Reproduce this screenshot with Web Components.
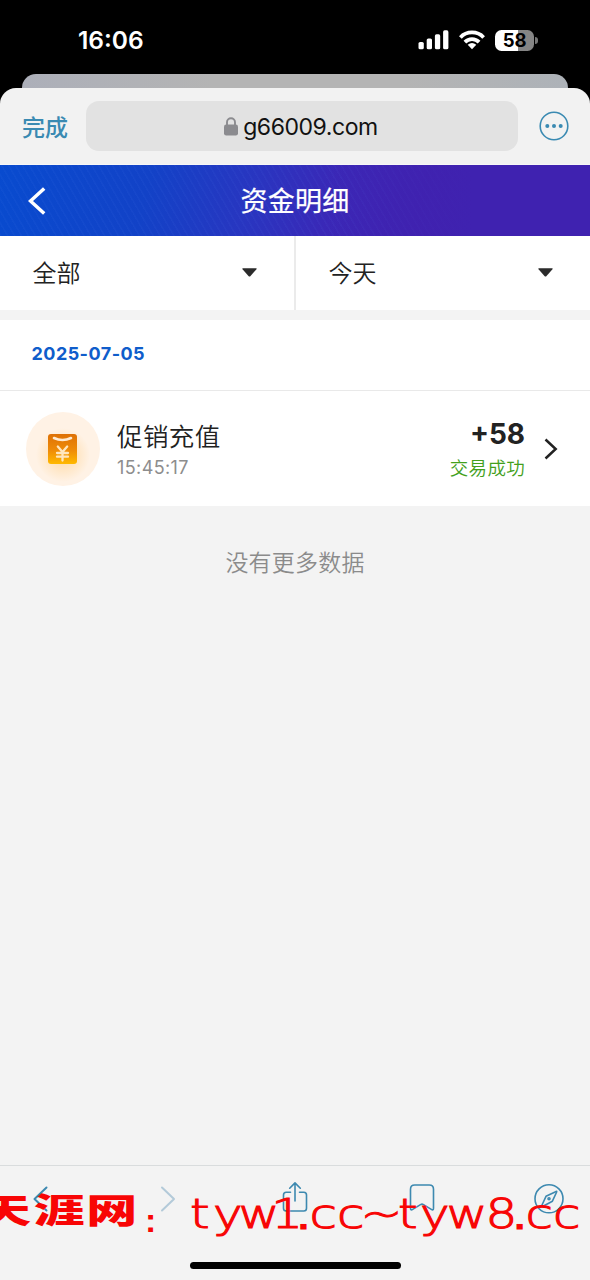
<!DOCTYPE html>
<html lang="zh-CN">
<head>
<meta charset="utf-8">
<title>资金明细</title>
<style>
html,body{margin:0;background:#000}
body{width:590px;height:1280px;overflow:hidden;font-family:Inter,"Noto Sans CJK SC",sans-serif}
</style>
</head>
<body>
<funds-app></funds-app>
<script>
function define(name, html) {
  const template = document.createElement('template');
  template.innerHTML = html;
  customElements.define(name, class extends HTMLElement {
    constructor() {
      super();
      this.attachShadow({ mode: 'open' }).appendChild(template.content.cloneNode(true));
    }
  });
}

define('status-bar', `
<style>
:host{display:flex;flex-direction:column;height:88px;background:#000;color:#fff}
.row{display:flex;align-items:center;height:74px;padding:6px 52px 0 78px;box-sizing:border-box;justify-content:space-between}
.time{font-size:24.5px;font-weight:600;line-height:30px;letter-spacing:0}
.icons{display:flex;align-items:center;gap:9px}
svg{display:block}
.battery{display:flex;align-items:center;gap:1px}
.cell{width:39px;height:21px;border-radius:6.5px;background:linear-gradient(90deg,#fff 58%,#858585 58%);color:#000;font-weight:700;font-size:18.5px;line-height:21px;text-align:center;letter-spacing:-.3px}
.tip{width:3px;height:7px;border-radius:0 3px 3px 0;background:#777}
.back{height:14px;margin:0 22px;border-radius:14px 14px 0 0;background:linear-gradient(90deg,#acafb9,#b4b4b4 35%,#b4b4b4 70%,#adb2b8)}
</style>
<div class="row"><span class="time">16:06</span>
<div class="icons">
<svg width="31" height="20" viewBox="0 0 31 20" fill="#fff"><rect x="0.5" y="12" width="5.3" height="7.3" rx="1.6"/><rect x="8.7" y="8.5" width="5.3" height="10.8" rx="1.6"/><rect x="16.9" y="4.3" width="5.3" height="15" rx="1.6"/><rect x="25.1" y=".3" width="5.3" height="19" rx="1.6"/></svg>
<svg width="28" height="20" viewBox="0 0 28 20"><g fill="none" stroke="#fff" stroke-width="3.7"><path d="M2.4 7.4C8.5.8 19.5.8 25.6 7.4"/><path d="M6.9 12.1C10.8 8 17.2 8 21.1 12.1"/></g><path d="M9.7 14.8Q14 11.2 18.3 14.8L14 19.3Z" fill="#fff"/></svg>
<div class="battery"><div class="cell">58</div><div class="tip"></div></div>
</div></div>
<div class="back"></div>`);

define('address-bar', `
<style>
:host{display:flex;align-items:center;box-sizing:border-box;height:77px;padding:0 21px 1px 22px;background:#f2f2f2;border-radius:16px 16px 0 0;box-shadow:inset 0 -1px #f7f7f7}
.done{width:64px;color:#3a8ab2;font-weight:500;font-size:23px;line-height:30px;font-family:"Noto Sans CJK SC",sans-serif}
.field{display:flex;align-items:center;justify-content:center;gap:6px;width:432px;height:50px;border-radius:13px;background:#e2e2e2;color:#111;font-size:23px;letter-spacing:-.45px}
.field span{margin:1px 1px 0 -1px}
.field svg{margin-left:-1px}
.more{margin-left:auto;display:block}
</style>
<span class="done">完成</span>
<div class="field"><svg width="14" height="19" viewBox="0 0 14 19"><rect y="7.6" width="14" height="10.8" rx="2.2" fill="#8b8b8f"/><path d="M3 9V5.2a4 4 0 0 1 8 0V9" fill="none" stroke="#8b8b8f" stroke-width="1.9"/></svg><span>g66009.com</span></div>
<svg class="more" width="30" height="30" viewBox="0 0 30 30"><circle cx="15" cy="15" r="13.8" fill="none" stroke="#3a8ab2" stroke-width="1.6"/><g fill="#3a8ab2"><circle cx="8.3" cy="15" r="2"/><circle cx="15" cy="15" r="2"/><circle cx="21.7" cy="15" r="2"/></g></svg>`);

define('page-header', `
<style>
:host{display:grid;grid-template-columns:80px 1fr 80px;align-items:center;height:71px;color:#fff;background:linear-gradient(90deg,transparent 55%,#3f22b0 80%),repeating-linear-gradient(60deg,rgba(110,150,255,.05) 0 1px,transparent 2px 6px),linear-gradient(102deg,#084bcf 0%,#1242c7 25%,#2935c0 43%,#3a28b7 56%,#421fad 77%,#411ea8 100%)}
svg{display:block;margin-left:28px}
h1{margin:-2px 0 0;text-align:center;font:400 27px/40px "Noto Sans CJK SC",sans-serif;letter-spacing:.3px;-webkit-text-stroke:.25px #fff}
</style>
<svg width="18" height="28" viewBox="0 0 18 28"><path d="M16.2 1.5 2.5 14l13.7 12.5" fill="none" stroke="#fff" stroke-width="3.5"/></svg>
<h1><slot></slot></h1>`);

define('filter-select', `
<style>
:host{display:flex;align-items:center;justify-content:space-between;box-sizing:border-box;height:74px;padding:0 37px 0 32.5px;background:#fff;color:#222;font:350 24px/36px "Noto Sans CJK SC",sans-serif}
svg{display:block;margin-top:-1px}
span{margin-top:-2px}
</style>
<span><slot></slot></span><svg width="15" height="9" viewBox="0 0 15 9"><path d="M1 .3h13q1.2.1.5 1L8.3 8.2q-.8.8-1.6 0L.5 1.3Q-.2.4 1 .3Z" fill="#2b2b2b"/></svg>`);

define('filter-bar', `
<style>
:host{display:grid;grid-template-columns:294px 2px 294px;gap:0;height:74px;background:#fff}
i{background:#ebebeb}
</style>
<filter-select>全部</filter-select><i></i><filter-select>今天</filter-select>`);

define('date-heading', `
<style>
:host{display:flex;align-items:center;box-sizing:border-box;height:71px;margin-top:10px;padding:0 31.5px 3px;background:#fff;border-bottom:1px solid #e9e9e9;color:#0f5dcb;font-weight:650;font-size:18px;letter-spacing:.45px}
</style><slot></slot>`);

define('transaction-row', `
<style>
:host{display:flex;align-items:center;box-sizing:border-box;height:115px;padding:0 32px 0 26px;background:#fff;color:#222}
.icon{width:74px;height:74px;display:block;flex:none}
.main{margin-left:17px;display:flex;flex-direction:column;flex:1}
.title{font:350 25.5px/36px "Noto Sans CJK SC",sans-serif;letter-spacing:.4px;margin-top:-1px}
.time{font-size:18px;line-height:24px;color:#8d8d8d;margin-top:3px;letter-spacing:.4px}
.end{display:flex;flex-direction:column;align-items:flex-end}
.amount{font-weight:700;font-size:28px;line-height:34px;letter-spacing:0;margin-top:1px}
.state{font:350 18.5px/28px "Noto Sans CJK SC",sans-serif;color:#43a01c;letter-spacing:.3px;margin-top:2px}
.go{display:block;margin-left:19px}
</style>
<svg class="icon" viewBox="0 0 74 74"><defs><linearGradient id="g" x2="0" y2="1"><stop stop-color="#de7105"/><stop offset=".55" stop-color="#ef8c08"/><stop offset="1" stop-color="#ffb900"/></linearGradient><radialGradient id="halo"><stop stop-color="#ffd08a"/><stop offset="1" stop-color="#ffd08a" stop-opacity="0"/></radialGradient></defs>
<circle cx="37" cy="37" r="37" fill="#fff2e5"/><circle cx="37" cy="43" r="27" fill="url(#halo)" opacity=".75"/>
<rect x="22" y="22" width="29" height="30" rx="3" fill="url(#g)"/>
<path d="M28 26Q36.5 30 45 26" fill="none" stroke="#ffead0" stroke-width="2.6" stroke-linecap="round"/>
<path d="M31.8 34.5 36.5 40 41.2 34.5M36.5 40V48.5M31 41H42M31 44.7H42" fill="none" stroke="#ffe6bd" stroke-width="2.3" stroke-linecap="round"/></svg>
<div class="main"><span class="title"><slot name="title"></slot></span><span class="time"><slot name="time"></slot></span></div>
<div class="end"><span class="amount"><slot name="amount"></slot></span><span class="state"><slot name="state"></slot></span></div>
<svg class="go" width="14" height="22" viewBox="0 0 14 22"><path d="M1.5 1.5 11.7 11 1.5 20.5" fill="none" stroke="#222" stroke-width="2.5"/></svg>`);

define('list-end', `
<style>
:host{display:block;flex:1;padding-top:38px;text-align:center;color:#8b8b8b;font:350 23px/34px "Noto Sans CJK SC",sans-serif;letter-spacing:.2px}
</style><slot></slot>`);

define('browser-toolbar', `
<style>
:host{display:flex;flex-direction:column;box-sizing:border-box;height:115px;border-top:1px solid #d9dcdd;background:#f3f3f3}
.buttons{display:grid;grid-template-columns:repeat(5,1fr);align-items:center;justify-items:center;width:634px;margin-left:-22px;height:64px}
svg{display:block;fill:none;stroke:#3d89b0;stroke-width:1.6;stroke-linecap:round;stroke-linejoin:round}
.home{width:211px;height:7px;border-radius:4px;background:#000;margin:32px auto 0}
</style>
<div class="buttons">
<svg width="30" height="34" viewBox="0 0 30 34" style="stroke-width:2"><path d="M20.5 6.5 8.5 18 20.5 29.5"/></svg>
<svg width="30" height="34" viewBox="0 0 30 34" style="stroke:#b3cad9;stroke-width:2"><path d="M9 6.5 21 18 9 29.5"/></svg>
<svg width="30" height="34" viewBox="0 0 30 34"><path d="M10.5 11.3H6.2Q3.5 11.3 3.5 14V27.3Q3.5 30 6.2 30H23.8Q26.5 30 26.5 27.3V14Q26.5 11.3 23.8 11.3H19.5M15 20V2M9.7 7.2 15 1.9 20.3 7.2"/></svg>
<svg width="30" height="34" viewBox="0 0 30 34"><path d="M3.5 27.3V8.2Q3.5 4 7.7 4H22.3Q26.5 4 26.5 8.2V27.3Q26.5 29.7 24.3 28.4L16.5 23.6Q15 22.7 13.5 23.6L5.7 28.4Q3.5 29.7 3.5 27.3Z"/></svg>
<svg width="30" height="34" viewBox="0 0 30 34"><circle cx="15" cy="17.8" r="14"/><path d="M22.2 10.6Q23.2 9.6 22.2 12L18.4 20.2 9 25.2Q7.2 26 8 24L12 15.3Z"/><circle cx="15" cy="17.8" r="1"/></svg>
</div><div class="home"></div>`);

define('site-watermark', `
<style>
:host{position:absolute;left:0;bottom:0;width:590px;height:115px;pointer-events:none;overflow:hidden}
svg{display:block}text{fill:#f80505}
.han{font:800 34px "Noto Sans CJK SC",sans-serif}
.colon{font:700 34px "Liberation Sans",sans-serif}
.latin{font:200 40px "DejaVu Sans Light","DejaVu Sans",sans-serif;stroke:#f80505;stroke-width:1.1}
.dot{stroke-width:3}
</style>
<svg width="590" height="115"><text class="han" transform="translate(-20 58) scale(1.5 1)" x="0 35.8 70.8">天涯网</text><text class="colon" x="145" y="67">:</text>
<text class="latin" transform="translate(0 63) scale(1.25 1)" x="152 170.4 190.8 217 236.5 247.6 269.6 288.4 318.4 336 357.3 388.4 409.5 420.5 442.5" y="0">tyw1<tspan class="dot">.</tspan>cc~tyw8<tspan class="dot">.</tspan>cc</text></svg>`);

define('funds-app', `
<style>
:host{display:flex;flex-direction:column;position:relative;width:590px;height:1280px;background:#000}
main{display:flex;flex-direction:column;flex:1;background:#f3f3f3}
</style>
<status-bar></status-bar><address-bar></address-bar>
<main><page-header>资金明细</page-header><filter-bar></filter-bar>
<date-heading>2025-07-05</date-heading>
<transaction-row><span slot="title">促销充值</span><span slot="time">15:45:17</span><span slot="amount">+58</span><span slot="state">交易成功</span></transaction-row>
<list-end>没有更多数据</list-end></main>
<browser-toolbar></browser-toolbar><site-watermark></site-watermark>`);
</script>
</body>
</html>
